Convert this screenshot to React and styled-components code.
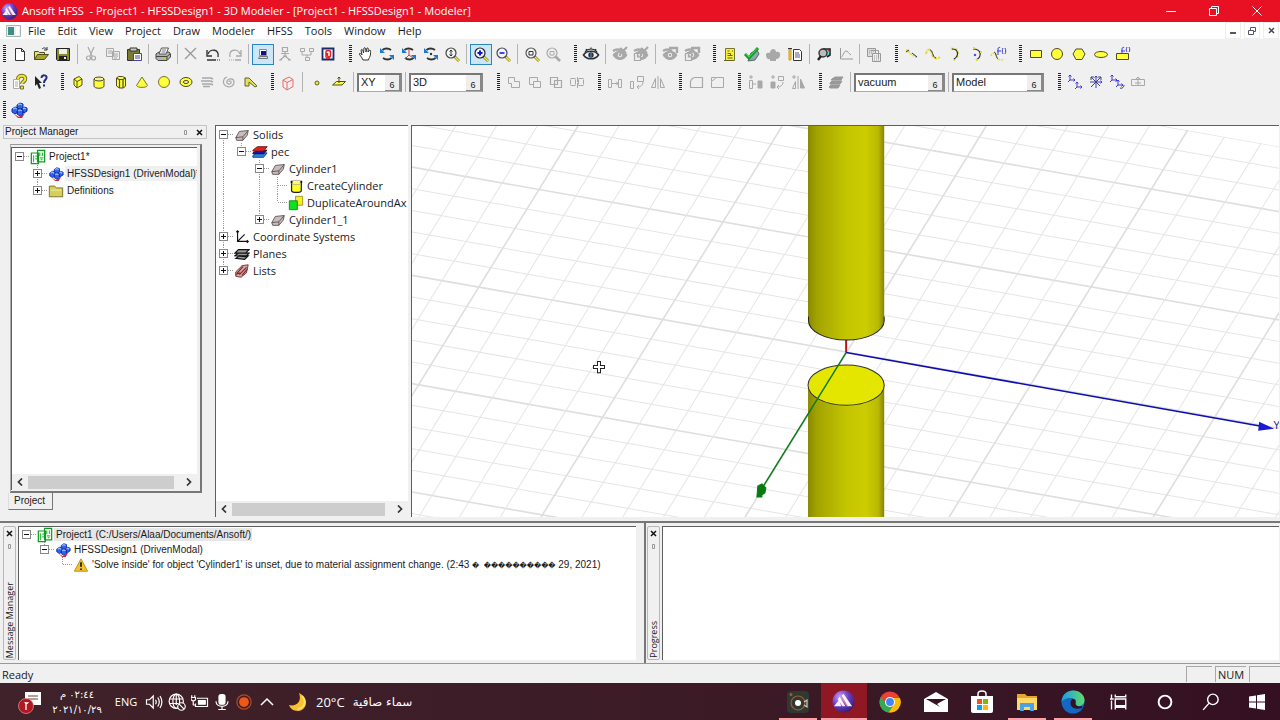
import React from 'react';
import styled, { createGlobalStyle, css } from 'styled-components';

const UI = '"Open Sans", "Noto Sans", sans-serif';
const CLASSIC = '"Liberation Sans", Arial, sans-serif';

const Global = createGlobalStyle`
  * { box-sizing: border-box; }
  body { margin: 0; background: #f0f0f0; color: #1a1a1a; font: 11px ${UI}; }
  button, select { font: inherit; color: inherit; }
  button { background: none; border: 0; padding: 0; margin: 0; }
  ul { list-style: none; margin: 0; padding: 0; }
  svg { display: block; }
`;

const App = styled.div`
  min-height: 100vh;
  display: flex;
  flex-direction: column;
`;

/* ---------- title and menu ---------- */
const TitleBar = styled.header`
  height: 22px;
  flex: none;
  display: flex;
  align-items: center;
  padding: 0 2px 0 1px;
  background: #e81123;
  color: #fff;
  h1 { flex: 1; margin: 0 0 0 4px; font: 11px/20px ${UI}; white-space: pre; }
`;
const WinButton = styled.button`
  width: 43px;
  height: 20px;
  display: flex;
  align-items: center;
  justify-content: center;
`;
const MenuBar = styled.nav`
  height: 17px;
  flex: none;
  display: flex;
  align-items: center;
  padding: 0 1px 0 6px;
  background: #fff;
`;
const MenuItem = styled.button`
  padding: 0 6px;
  font: 11px/17px ${UI};
  &:first-of-type { margin-left: 1px; }
`;
const ChildButton = styled.button`
  width: 16px;
  height: 17px;
  margin-left: 3px;
  display: grid;
  place-items: center;
  border: 1px solid #eee;
`;
const Spacer = styled.div`flex: 1;`;

/* ---------- toolbars ---------- */
const Toolbars = styled.div`
  flex: none;
  height: 86px;
  padding-top: 1px;
`;
const ToolRow = styled.div`
  display: flex;
  height: 28px;
  align-items: center;
`;
const Group = styled.div`
  width: ${p => p.$w}px;
  flex: none;
  height: 24px;
  display: flex;
  align-items: center;
  padding: 0 7px 0 3px;
`;
const Grip = styled.span`
  width: 3px;
  height: 18px;
  margin-right: 3px;
  background: repeating-linear-gradient(#222 0 1px, #f0f0f0 1px 2px);
`;
const ToolButton = styled.button`
  flex: 1 1 0;
  min-width: 0;
  max-width: 22px;
  height: 21px;
  display: flex;
  align-items: center;
  justify-content: center;
  ${p => p.$on && css`background: #cde6f7; border: 1px solid #2a86c0;`}
  svg { flex: none; }
`;
const Sep = styled.span`
  width: 1px;
  height: 20px;
  margin: 0 3px;
  background: #b4b4b4;
`;
const ComboBox = styled.span`
  width: ${p => p.$w}px;
  height: 19px;
  flex: none;
  display: flex;
  background: #fff;
  border: 2px solid #777;
  border-right-color: #888;
  border-bottom: 1px solid #aaa;
  select {
    flex: 1;
    min-width: 0;
    appearance: none;
    border: 0;
    padding: 0 0 0 2px;
    background: none;
    font: 11px/15px ${CLASSIC};
  }
  span {
    width: 15px;
    padding-top: 4px;
    background: #eee;
    border-right: 1px solid #888;
    border-bottom: 1px solid #888;
    font: 9px/12px ${CLASSIC};
    text-align: center;
  }
`;

/* ---------- work area ---------- */
const Work = styled.main`
  flex: 1;
  min-height: 391px;
  display: flex;
  gap: 3px;
`;
const ManagerPane = styled.section`
  width: 212px;
  flex: none;
  display: flex;
  flex-direction: column;
  padding: 0 5px 7px 3px;
`;
const Caption = styled.header`
  height: 14px;
  flex: none;
  display: flex;
  align-items: center;
  border: 1px solid #c4c4c4;
  h2 { flex: 1; margin: 0 0 0 1px; font: 10px/12px ${CLASSIC}; }
  button { width: 14px; display: grid; place-items: center; }
`;
const Frame = styled.div`
  flex: 1;
  margin: 5px 5px 0 7px;
  padding: 2px 3px 1px 0;
  display: flex;
  border-top: 1px solid #999;
  border-left: 1px solid #aaa;
  border-right: 2px solid #777;
  border-bottom: 2px solid #777;
`;
const Pane = styled.div`
  flex: 1;
  min-width: 0;
  display: flex;
  flex-direction: column;
  overflow: hidden;
  background: #fff;
  border-top: 1px solid #5e5e5e;
  border-left: 1px solid #5e5e5e;
`;
const ModelPane = styled.section`
  width: 193px;
  flex: none;
  display: flex;
`;
const ViewPane = styled.section`
  flex: 1;
  min-width: 0;
  margin-right: 1px;
  position: relative;
  background: #fff;
  border-top: 1px solid #5e5e5e;
  border-left: 1px solid #5e5e5e;
`;
const Scene = styled.svg`
  position: absolute;
  inset: 0;
  width: 100%;
  height: 100%;
`;
const Tab = styled.button`
  align-self: flex-start;
  height: 17px;
  margin-left: 5px;
  padding: 0 7px 0 5px;
  border: 1px solid #777;
  border-top: 0;
  border-left-color: #ddd;
  font: 10px/16px ${CLASSIC};
`;
const ScrollBar = styled.div`
  height: 16px;
  flex: none;
  display: flex;
  align-items: center;
  background: #f0f0f0;
  button { width: 16px; height: 16px; display: grid; place-items: center; }
`;
const Track = styled.span`
  flex: 1;
  height: 13px;
  margin-right: 4px;
`;
const Thumb = styled.span`
  display: block;
  width: 98%;
  height: 13px;
  background: #cdcdcd;
`;

/* ---------- trees ---------- */
const Tree = styled.ul`
  flex: 1;
  overflow: hidden;
  font: ${p => (p.$classic ? `10px ${CLASSIC}` : `11px ${UI}`)};
`;
const TreeRow = styled.li`
  height: ${p => p.$h}px;
  display: flex;
  align-items: center;
  white-space: pre;
  svg { flex: none; }
`;
const TreeLabel = styled.span`
  margin-left: 1px;
  padding: 0 1px 0 2px;
  line-height: ${p => p.$h - 2}px;
  background: ${p => p.$bg || 'none'};
`;
const Unreadable = styled.span`
  font: 7px "DejaVu Sans", sans-serif;
`;

/* ---------- bottom docks ---------- */
const Docks = styled.section`
  flex: none;
  height: 142px;
  display: flex;
  margin-top: 4px;
  border-top: 2px solid #777;
`;
const Dock = styled.div`
  flex: 1 1 0;
  display: flex;
  gap: 2px;
  min-width: 0;
  ${p => p.$first
    ? css`padding: 3px 8px 3px 3px;`
    : css`padding: 3px 1px 3px 1px; border-left: 2px solid #777;`}
`;
const SideCaption = styled.header`
  width: 13px;
  flex: none;
  display: flex;
  flex-direction: column;
  align-items: center;
  border: 1px solid #b8b8b8;
  border-radius: 2px;
  button { height: 13px; width: 11px; display: grid; place-items: center; }
  h2 {
    margin: auto 0 1px;
    writing-mode: vertical-rl;
    transform: rotate(180deg);
    font: 9px/11px ${UI};
  }
`;
const StatusBar = styled.footer`
  height: 20px;
  flex: none;
  display: flex;
  gap: 3px;
  padding: 2px 0 1px 2px;
  border-top: 1px solid #999;
  line-height: 17px;
`;
const StatusCell = styled.span`
  width: ${p => p.$w}px;
  padding-left: 2px;
  border-top: 1px solid #a8a8a8;
  border-left: 1px solid #a8a8a8;
  line-height: 15px;
`;

/* ---------- taskbar ---------- */
const TaskBar = styled.footer`
  height: 37px;
  flex: none;
  display: flex;
  align-items: stretch;
  background: linear-gradient(90deg, #40222a, #3b1a26 60%, #341022);
  color: #fff;
`;
const Tray = styled.div`
  display: flex;
  align-items: center;
  padding-left: 15px;
`;
const TrayButton = styled.button`
  width: ${p => p.$w || 23}px;
  height: 37px;
  display: flex;
  align-items: center;
  justify-content: center;
`;
const Clock = styled.time`
  width: 66px;
  text-align: center;
  font: 10px/15px "DejaVu Sans", sans-serif;
  span { display: block; }
`;
const Weather = styled.button`
  display: flex;
  align-items: center;
  gap: 8px;
  margin-left: 10px;
  font: 13px ${UI};
  bdi { font: 12px "DejaVu Sans", sans-serif; }
`;
const Apps = styled.div`
  width: 505px;
  margin-left: auto;
  display: flex;
`;
const AppButton = styled.button`
  flex: 1;
  display: flex;
  align-items: center;
  justify-content: center;
  background: ${p => (p.$active ? '#8f1824' : 'none')};
  ${p => p.$open && css`
    background-image: linear-gradient(#ffa0a8, #ffa0a8);
    background-size: ${p.$active ? '100%' : '38px'} 2px;
    background-position: bottom center;
    background-repeat: no-repeat;
  `}
`;

/* ---------- drawings ---------- */
const Y = '#ffff3c';
const K = '#4c4c1e';
const G = '#a8a8a8';
const B = '#3a3ad8';

const Svg = ({ s = 18, children, ...r }) => (
  <svg width={s} height={s} viewBox="0 0 18 18" fill="none" stroke="#333" strokeWidth="1" aria-hidden="true" {...r}>{children}</svg>
);

const lens = (c, inner, handle) => (
  <>
    <path d="M11.500 11.500 16 16" stroke={handle || '#77732a'} strokeWidth="2.600" />
    {!handle && <path d="M12 12 16 16" stroke="#f2e640" strokeWidth="1.600" />}
    <circle cx="8" cy="8" r="5" stroke={c} strokeWidth="1.200" fill={handle ? 'none' : '#f4f4f4'} />
    {inner}
  </>
);
const rotate = extra => (
  <>
    <path d="M4.500 5c2-2 6-2 8.500 0M13.500 13c-2 2-6 2-8.500 0" stroke="#333" strokeWidth="1.800" />
    <path d="M2 3v5h5zM16 15v-5h-5z" fill="#1678d8" stroke="none" />
    {extra}
  </>
);
const eye = (c, extra) => (
  <>
    <path d="M1.500 10c3-5 12-5 15 0-3 5-12 5-15 0z" stroke={c} strokeWidth="1.600" />
    <path d="M3 7c3-4 9-4 12 0M4 4l1 2M9 2.500v2M14 4l-1 2" stroke={c} strokeWidth="1.200" />
    <circle cx="9" cy="10" r="2.700" fill={c} stroke="none" />
    {extra}
  </>
);
const eyeOff = extra => (
  <>
    <path d="M2 10c3-5 11-5 14 0-3 6-11 6-14 0z" fill={G} stroke={G} />
    <path d="M2 6c3-2 6-2 9 0" stroke={G} strokeWidth="2.400" />
    <circle cx="9" cy="10" r="2.200" fill="#eee" stroke="none" />
    <circle cx="9" cy="10" r="1.200" fill={G} stroke="none" />
    {extra}
  </>
);
const crossMark = <path d="m9 3 6 5M16 2 9 9" stroke={G} strokeWidth="2.200" />;
const barMark = <path d="M8 3h8v5" stroke={G} strokeWidth="2.400" />;
const boxMark = <path d="M2.500 8.500h6v7h-6zM5.500 9v3h3" fill="#eee" stroke={G} strokeWidth="1.200" />;
const axes = (x, y, c = B) => (
  <path key={x + '-' + y} d={`M${x} ${y}v-5m-1.500 1.500 1.500-1.500 1.500 1.500M${x} ${y}h5m-1.500-1.500 1.500 1.500-1.500 1.500M${x} ${y}l-2 2`} stroke={c} />
);

const ICONS = {
  new: <path d="M4.500 3.500h6l3 3v9h-9zM10.500 3.500v3h3" fill="#fff" />,
  open: <><path d="M2.500 14.500v-8h4l1 1h5v2" fill="#e8e27a" stroke={K} /><path d="m2.500 14.500 3-5h11l-4 5z" fill="#a8a32a" stroke={K} /><path d="M10 4c2-2 4-1 5 1m0-3v3h-3" /></>,
  save: <><path d="M2.500 3.500h13v12h-12l-1-1z" fill="#8a8a2a" stroke="#222" /><path d="M5 4h8v5H5z" fill="#eee" stroke="none" /><path d="M5 11h8v4H5z" fill="#222" stroke="none" /><path d="M10 12h2v2h-2z" fill="#eee" stroke="none" /></>,
  cut: <g stroke={G} strokeWidth="1.200"><path d="m6 2 4 9M12 2 8 11" /><circle cx="6.500" cy="13" r="2" /><circle cx="11.500" cy="13" r="2" /></g>,
  copy: <g stroke={G}><path d="M2.500 3.500h7v8h-7zM8.500 6.500h7v8h-7z" fill="#eee" /><path d="M4 6h4M4 8h4M10 9h4M10 11h4M10 13h3" /></g>,
  paste: <><path d="M2.500 4.500h12v11h-12z" fill="#7a7a30" stroke="#333" /><path d="M5 3h7v3H5z" fill="#ccc" stroke="#333" /><path d="M8.500 8.500h8v7h-8z" fill="#fff" stroke="#449" /><path d="M10 11h5M10 13h5" stroke="#449" /></>,
  print: <><path d="m2 9 3-2h10l1.500 2v3L13 15.500H4L2 13.500z" fill="#b4b4b4" stroke="#444" /><path d="m5 9 2.500-6h7L12 9z" fill="#fff" stroke="#555" /><path d="M8 5h4M7.500 7h4" stroke="#777" /><path d="M2 11.500h11l3-2.500M13 12v3" stroke="#444" /><path d="M9 13.500h3" stroke="#cccc20" /></>,
  del: <path d="m3 3 11 11M14 3 3 14" stroke="#999" strokeWidth="1.400" />,
  undo: <><path d="M4 9c2-6 12-5 10 3" strokeWidth="1.400" /><path d="M3 5v6h5" strokeWidth="1.400" /><path d="M3 15h9" strokeWidth="1.500" /><path d="M13 15h3" strokeDasharray="1 1" /></>,
  redo: <g stroke={G}><path d="M14 9C12 3 2 4 4 12M15 5v6h-5" strokeWidth="1.300" /><path d="M3 15h5" strokeDasharray="1 1" /><path d="M9 15h6" strokeWidth="1.500" /></g>,
  monitor: <><path d="M5.500 4.500h7v6h-7z" fill="#fff" stroke="#8a8a9a" /><path d="M7 6h5v4H7z" fill="#11118f" stroke="none" /><path d="m4.500 13.500 1-2h8v2z" fill="#ddd" stroke="#777" /></>,
  local: <g stroke={G}><path d="M6.500 2.500h5v4h-5zM5 8.500h8M9 7v4M4 15l5-4 5 4M7 11h4M3 15h3M12 15h3" strokeWidth="1.200" /></g>,
  network: <g stroke={G}><path d="M2.500 3.500h4v3h-4zM11.500 3.500h4v3h-4zM4 7v3h9V7M9 10v2M7.500 12.500h4v3h-4z" /></g>,
  queue: <><path d="M3.500 3.500h11v11h-11z" fill="#fff" stroke="#1b2a70" strokeWidth="1.800" /><path d="M7 12.500V7c0-2 4.500-2 4.500 0v3.500c0 2-3 2-3 0V8M7 13h4" stroke="#d22" strokeWidth="1.500" /></>,
  hand: <path d="M6 15c-1-3-4-5-3.500-6.500C4 8 5 10 5 10L4 5c1-1.500 2 0 2.500 3L7 3c1-1 2 0 2 4l1-4c1.500-.5 1.500 1 1 4l1.500-2c1.500 0 1 2 1 4 0 3-2 4-2 6z" fill="#fff" />,
  rot1: rotate(),
  rot2: rotate(<path d="M9 5v5l-4 4M9 10l4 3" stroke="#d33" />),
  rot3: rotate(<circle cx="9" cy="9" r="1.200" fill="#333" stroke="none" />),
  zoomDyn: lens('#444', <path d="M8 5v6M6.500 6.500 8 5l1.500 1.500M6.500 9.500 8 11l1.500-1.500" />),
  zoomIn: lens('#223', <path d="M8 5.500v5M5.500 8h5" stroke="#1111d0" strokeWidth="2" />),
  zoomOut: lens('#446', <path d="M5.500 8h5" stroke="#1111d0" strokeWidth="1.500" />),
  fit: lens('#555', <path d="M6 6.500h4v3.500H6z" />),
  fitSel: lens(G, <path d="M6 6.500h4v3.500H6z" stroke={G} />, G),
  eye: eye('#2c3038', <path d="M9 8v4" stroke="#49e" />),
  hide1: eyeOff(crossMark),
  hide2: eyeOff(<>{crossMark}{boxMark}</>),
  hide3: eyeOff(barMark),
  hide4: eyeOff(<>{barMark}{boxMark}</>),
  list: <><path d="M4.500 3.500h9v12h-9z" fill="#f5f03a" stroke="#77752a" /><path d="M3 15.500h9M6.500 6h2M11 6h1M6.500 8.500h3v2M6.500 10.500h5M6.500 13h5" stroke="#66632a" /></>,
  check: <><path d="m8 8 6-3 2 4-4 6-7 1z" fill="#8aa" stroke="#566" /><path d="m2 9 4 4L15 3" stroke="#1b9a2e" strokeWidth="3" /><path d="m3 9 3 3L14 3.500" stroke="#3fe052" strokeWidth="1" /></>,
  analyze: <path d="M2 10c0-3 4-2 4-2 0-5 6-5 6-1 3-1 5 1 4 4-1 3-3 3-4 3v2H6v-2c-2 1-4-1-4-4z" fill={G} stroke="none" />,
  notes: <><path d="M3 4h2v11H3z" fill="#ec4" stroke="#cc9a22" /><path d="M2 3.500h4" /><path d="M7.500 4.500h6l2 2v9h-8z" fill="#fff" /><path d="M9 8h4M9 10h5M9 12h5" stroke="#558" /></>,
  field: <><path d="M8 4h7v6l-3 2" fill="#5dd" stroke="#222" strokeWidth="1.600" /><circle cx="8" cy="8" r="4" fill="#bbb" stroke="#333" strokeWidth="1.400" /><path d="m6 11-3 4" stroke="#222" strokeWidth="2.400" /><path d="m13 5 2 3" stroke="#d33" /></>,
  graph: <path d="M4.500 3v11H17M4 13c3-1 4-7 6-7s2 2 5 4" stroke="#999" />,
  report: <g stroke="#999"><path d="M2.500 3.500h8v8h-8z" fill="#ddd" /><path d="M7.500 8.500h8v8h-8z" fill="#eee" /><path d="M4 6h5M4 8h3M9 11h5M9 13h5M9 15h5" strokeDasharray="1 1" /><path d="M5.500 5.500h8v8" /></g>,
  line: <><path d="M3 6c3-3 3 3 5 3s4 5 7 2" stroke="#e4da3a" strokeWidth="2" strokeDasharray="2 1" /><path d="m3 7 3-2M9 8l5 4" /></>,
  spline: <><path d="M2 9c1-6 5-6 6 0s6 5 8 3" stroke="#e4da3a" strokeWidth="2" strokeDasharray="3 1" /><path d="M6 5c3 0 2 7 6 8" /></>,
  arc3: <><path d="M5 4c9-2 9 9 2 11" stroke="#e4da3a" strokeWidth="2.400" strokeDasharray="2 2" /><path d="M6 4c7 0 7 7 2 10" strokeWidth="1.200" /></>,
  arcC: <><path d="M5 4c9 0 9 8 3 11" strokeWidth="1.200" /><path d="M5 3h2M12 7h2M8 15h2" stroke="#e4da3a" strokeWidth="2" /><circle cx="7" cy="10" r=".8" fill={B} stroke={B} /></>,
  eqCurve: <><path d="M2 11c3-6 5-2 6 1s4 4 7 2" stroke="#e4da3a" strokeWidth="1.500" strokeDasharray="2 1" /><path d="M5 7c2 0 2 6 4 7" /><path d="M9 10V4c0-2 2-2 2-1M8 6h4M14 3c-1 2-1 4 0 6M16 3c1 2 1 4 0 6" stroke={B} /></>,
  rect: <path d="M3.500 5.500h11v7h-11z" fill={Y} stroke={K} />,
  circle: <circle cx="9" cy="9" r="5.500" fill={Y} stroke={K} />,
  poly: <path d="m6 4-3 5 3 5.500h6L15 9l-3-5z" fill={Y} stroke={K} />,
  ellipse: <ellipse cx="9" cy="9.500" rx="6.500" ry="3" fill={Y} stroke={K} />,
  eqSurf: <><path d="M3.500 8.500h12v6h-12z" fill={Y} stroke={K} /><path d="M9 9V4c0-2 2-2 2-1M8 6h4M14 2c-1 2-1 4 0 5M16 2c1 2 1 4 0 5" stroke={B} /></>,
  help: <><path d="M2.500 6.500h6v9h-6z" fill="#fff" stroke="#aaa" /><path d="M4 9h3M4 11h3M4 13h3" stroke="#aaa" /><path d="M7 6c0-5 9-4 7 1-1 2-3 2-3 4" stroke="#77712a" strokeWidth="4" /><path d="M7 6c0-5 9-4 7 1-1 2-3 2-3 4" stroke="#f0e62a" strokeWidth="2" /><path d="M9.500 13h3v3h-3z" fill="#f0e62a" stroke="#77712a" /></>,
  what: <><path d="m3 3 7 7H7l2 5-2 1-2-5-2 2z" fill="#222" stroke="none" /><path d="M9.500 5c0-4 6-3 5 0-.5 2-2.500 2-2.500 5M11 12.500h2" stroke="#262a80" strokeWidth="2" /></>,
  box: <><path d="m5 6 5-2.500 3 2.500v6l-5 3-3-3z" fill={Y} stroke={K} /><path d="m5 6 3 2.500v6M8 8.500 13 6" stroke={K} /></>,
  cyl: <><path d="M4 6v7c0 3 10 3 10 0V6" fill={Y} stroke={K} /><ellipse cx="9" cy="6" rx="5" ry="2" fill="#f3ef9a" stroke={K} /></>,
  prism: <><path d="M4.500 5v8l3 2h4l2-2V5l-3-1.500h-4z" fill={Y} stroke={K} /><path d="M4.500 5 7 6.500h4L13.500 5M7.500 7v8M11 7v8" stroke={K} strokeWidth="1.200" /></>,
  cone: <path d="M9 4 3.500 12.500c1 2.500 10 2.500 11 0z" fill={Y} stroke="#77752a" />,
  sphere: <circle cx="9" cy="9" r="5.500" fill={Y} stroke="#77752a" />,
  torus: <><ellipse cx="9" cy="9" rx="6" ry="4.500" fill={Y} stroke={K} /><ellipse cx="9" cy="9" rx="2.600" ry="1.500" fill="#eee" stroke={K} /></>,
  helix: <path d="M4 5h9l2 1M3 8h10l2 1M4 11h9l2 1M5 13.500h7" stroke={G} strokeWidth="1.500" />,
  spiral: <path d="M9 9c0-2 3-1 2 1s-5 1-4-2 7-3 7 1-4 6-8 4-3-8 1-9" stroke="#aaa" strokeWidth="1.200" />,
  bond: <path d="M4 13V5h4l8 8-2 1-6-5v4z" fill="#e4e05a" stroke="#66632a" />,
  redBox: <path d="m4 7 6-3 4 2.500v7L8 17l-4-3zM4 7l4 2.500V17M8 9.500l6-3" stroke="#e66" />,
  point: <circle cx="9" cy="10" r="2" fill="#e8e840" stroke="#66632a" />,
  plane: <><path d="m2.500 12 4-3.500h9L12 12z" fill={Y} stroke={K} /><path d="M9 10V4M7.500 5.500 9 4l1.500 1.500" stroke={K} /></>,
  unite: <path d="M3.500 4.500h6v4h5v6h-8v-4h-3z" stroke={G} />,
  subtract: <path d="M3.500 4.500h8v4M3.500 4.500v7h4M7.500 8.500h7v6h-7z" stroke={G} />,
  intersect: <path d="M3.500 4.500h7v7h-7zM7.500 7.500h7v7h-7z" stroke={G} strokeWidth="1.200" />,
  split: <path d="M2.500 5.500h5v7h-5zM10.500 5.500h5v7h-5zM9.500 4v11" stroke={G} strokeDasharray="5 1" />,
  move: <g stroke={G}><path d="M2.500 6.500h3v8h-3zM12.500 6.500h3v8h-3zM6 10.500h6M10 8.500l2 2-2 2" /></g>,
  rotateObj: <g stroke={G}><path d="M2.500 8.500h3v7h-3zM9.500 3.500h6v5h-6zM15 9c0 3-2 5-6 5m2-2-2 2 2 2" /></g>,
  mirror: <g stroke={G}><path d="m2.500 14.500 4-9v9zM9 3v13M11.500 5.500v9h4z" /></g>,
  fillet: <path d="M3.500 14.500v-6c1-3 3-4 5-4h7v10z" stroke={G} strokeWidth="1.200" />,
  chamfer: <path d="M3.500 14.500v-6l5-4h7v10zM3.500 8V4.500H8" stroke={G} />,
  dupLine: <g stroke={G}><path d="M3 4h4M5 2v4M3.500 7.500h3v8h-3zM7 11h3" /><path d="M12 8h4v7h-4z" fill={G} /></g>,
  dupAxis: <g stroke={G}><path d="M3 4h4M5 2v4M10.500 3.500h5v4h-5zM15 9c0 3-2 5-6 5m2-2-2 2 2 2" /><path d="M3 9h4v6H3z" fill={G} /></g>,
  dupMirror: <g stroke={G}><path d="M3 4h4M5 2v4M3.500 15.500l3-7v7zM9 3v13" /><path d="M11.500 6v9h4z" fill={G} /></g>,
  layers: <path d="m5 6 3-2h8l-2 3H4zM3 10l2-2h10l-2 3H3zM2 14l2-2h9l-2 3H3z" fill="#999" stroke="#999" />,
  cs1: <>{axes(4, 7)}{axes(11, 14)}</>,
  cs2: <><path d="M9 15V3M7.500 4.500 9 3l1.500 1.500M3 9h12M13.500 7.500 15 9l-1.500 1.500M6 12l-2 2" stroke={B} /><path d="m4 4 9 9M14 4l-8 8M4 7V4h3M14 7V4h-3" stroke="#446" /></>,
  cs3: <>{axes(4, 7)}{axes(10, 12)}<path d="M12 15c2 1 4-1 4-3" stroke="#334" /></>,
  csNone: <path d="M2.500 6.500h13v6h-13zM9 4v8M7 6l2-2 2 2M6 10h6" stroke={G} />,
};
const Blocks = () => (
  <>
    <path d="m4 13 5 3 6-4-3 5H8z" fill="#d8232f" stroke="none" />
    <path d="m2 8 3-2 3 1v4l-3 2-3-2zM7 10l3-2 3 1v4l-3 2-3-2zM7 4l3-2 3 1v4l-3 1-3-1zM12 8l2-2 3 1v3l-3 2-2-1z" fill="#2f62ee" stroke="#1128a8" />
    <path d="m3 8 2-1 2 1M8 4l2-1 2 1M8 10l2-1 2 1M13 8l1-1 2 1" stroke="#8cc0ff" strokeWidth="1.300" />
  </>
);
ICONS.blocks = <Blocks />;

const TREE_ICONS = {
  project: <><path d="M1.500 4.500h8v12h-8zM8.500 1.500h8v13h-8z" fill="#fff" stroke="#119a22" strokeWidth="1.400" /><path d="M4 7v8M6 8h2M6 11h2M11 4v4M14 4v4M11 10h4M12 12h2" stroke="#31c441" strokeWidth="1.400" /></>,
  blocks: <Blocks />,
  folder: <><path d="M1.500 15.500v-12h6l2 2h7v10z" fill="#d6cf5c" stroke="#6d6927" /><path d="M3 8h12" stroke="#f4f0a0" /></>,
  solid: <><path d="m2 12 4-7 10-1-1 5-5 6H3z" fill="#c9bcbc" stroke="#5c5050" /><path d="m2 12 8-1 6-7M10 11v4" stroke="#5c5050" /></>,
  pec: <><path d="m1 13 5-3h11l-4 5H1z" fill="#2b80e8" stroke="#123a90" /><path d="m1 10 5-3h11l-4 4H1z" fill="#1515a8" stroke="#111" /><path d="m1 7 5-4h11l-4 5H1z" fill="#e02020" stroke="#701010" /></>,
  cyl: <><path d="M4 5v9c0 3 11 3 11 0V5" fill="#ffff20" stroke="#222" strokeWidth="1.400" /><ellipse cx="9.500" cy="5" rx="5.500" ry="2.500" fill="#fff97a" stroke="#aa9" /><path d="M4 3v3M15 3v3" stroke="#111" strokeWidth="2" /></>,
  dup: <><path d="M8.500 1.500h8v10h-8z" fill="#f8ee20" stroke="#998f20" /><path d="M1.500 6.500h9v10h-9z" fill="#10e020" stroke="#0a8a14" /></>,
  coord: <path d="M4 2v12h12M4 14l8-8M2.500 3.500 4 2l1.500 1.500M14.500 12.500 16 14l-1.500 1.500" stroke="#111" strokeWidth="1.300" />,
  planes: <><path d="m1 8 4-4h12l-4 4zM1 11l4-3h12l-4 4zM2 14l4-3h10l-4 4z" fill="#999" stroke="#111" strokeWidth="1.300" /></>,
  lists: <><path d="m2 10 7-7 7-1-2 9-6 5-6-1z" fill="#cfa9a9" stroke="#6b2b2b" /><path d="m3 12 7-8M6 13l8-8M9 14l6-7M2 13l5-2" stroke="#8b2222" strokeWidth="1.300" /></>,
  warn: <><path d="m9 2 7.500 14h-15z" fill="#f3c22b" stroke="#b98a14" /><path d="M9 6v5M9 13v1.500" stroke="#222" strokeWidth="2" /></>,
};

const CloseX = ({ c = '#111' }) => <svg width="7" height="7" viewBox="0 0 7 7" aria-hidden="true"><path d="m1 1 5 5M6 1 1 6" stroke={c} strokeWidth="1.500" /></svg>;
const Pin = () => <svg width="3" height="5" fill="none" stroke="#999" aria-hidden="true"><path d="M.5.5h2v4h-2z" /></svg>;

const Logo = ({ s = 16 }) => (
  <svg width={s} height={s} viewBox="0 0 24 24" aria-hidden="true">
    <defs><radialGradient id="orb" cx=".35" cy=".3" r=".8"><stop offset="0" stopColor="#c8a8ff" /><stop offset=".5" stopColor="#6a3bbd" /><stop offset="1" stopColor="#2b1b6d" /></radialGradient></defs>
    <circle cx="12" cy="12" r="11.500" fill="url(#orb)" />
    <path d="m2 17 5-6 3 6zM6 10l2-3 6 10h-3zM10 6l2-2 9 13h-5z" fill="#fff" opacity=".92" />
    <path d="m10 6 7 11h-2L9 7z" fill="#e88" opacity=".7" />
  </svg>
);

const Tool = ({ n, on }) => (
  <ToolButton $on={on} aria-label={n}><Svg>{ICONS[n]}</Svg></ToolButton>
);
const Combo = ({ w, value, label }) => (
  <ComboBox $w={w}>
    <select aria-label={label} defaultValue={value}><option>{value}</option></select>
    <span aria-hidden="true">6</span>
  </ComboBox>
);

const ROW1 = [
  [346, 'new open save | cut copy paste | print | del undo redo | *monitor local network queue'],
  [225, 'hand rot1 rot2 rot3 zoomDyn | *zoomIn zoomOut | fit fitSel'],
  [139, 'eye | hide1 hide2 | hide3 hide4'],
  [182, 'list check analyze notes | field graph | report'],
  [124, 'line spline arc3 arcC eqCurve'],
  [124, 'rect circle poly ellipse eqSurf'],
];
const ROW2 = [
  [58, 'help what'],
  [210, 'box cyl prism cone sphere torus helix spiral bond'],
  [226, 'redBox | point plane | =XY | =3D'],
  [101, 'unite subtract intersect split'],
  [81, 'move rotateObj mirror'],
  [59, 'fillet chamfer'],
  [81, 'dupLine dupAxis dupMirror'],
  [239, 'layers | =vacuum | =Model'],
  [101, 'cs1 cs2 cs3 csNone'],
];
const COMBOS = {
  '=XY': [45, 'XY', 'Drawing plane'],
  '=3D': [74, '3D', 'Movement mode'],
  '=vacuum': [91, 'vacuum', 'Material'],
  '=Model': [92, 'Model', 'Object kind'],
};
const ToolGroups = ({ groups }) => groups.map(([w, items]) => (
  <Group key={items} $w={w} role="group">
    <Grip />
    {items.split(' ').map((n, i) => {
      if (n === '|') return <Sep key={i} />;
      if (COMBOS[n]) return <Combo key={i} w={COMBOS[n][0]} value={COMBOS[n][1]} label={COMBOS[n][2]} />;
      return n[0] === '*' ? <Tool key={i} n={n.slice(1)} on /> : <Tool key={i} n={n} />;
    })}
  </Group>
));

/* One guide column of a tree row: u/d/r are the line's arms, + and - the toggle. */
const Guide = ({ k, h }) => {
  const m = Math.floor(h / 2);
  const has = c => k.includes(c);
  const box = has('+') || has('-');
  return (
    <svg width="18" height={h} viewBox={`0 0 18 ${h}`} shapeRendering="crispEdges" aria-hidden="true">
      <g stroke="#999" strokeDasharray="1 1">
        {has('u') && <path d={`M7.500 0V${m}`} />}
        {has('d') && <path d={`M7.500 ${m}V${h}`} />}
        {has('r') && <path d={`M8 ${m + 0.5}H18`} />}
      </g>
      {box && <path d={`M3.500 ${m - 3.5}h8v8h-8z`} fill="#fff" stroke="#888" />}
      {box && <path d={`M5 ${m + 0.5}h5`} stroke="#111" />}
      {has('+') && <path d={`M7.500 ${m - 2}v5`} stroke="#111" />}
    </svg>
  );
};
const TreeView = ({ rows, h, ...rest }) => (
  <Tree {...rest}>
    {rows.map(([guides, icon, text, bg]) => (
      <TreeRow key={icon + guides.length + text} $h={h}>
        {guides.map((k, i) => <Guide key={i} k={k} h={h} />)}
        <Svg s={16}>{TREE_ICONS[icon]}</Svg>
        <TreeLabel $h={h} $bg={bg}>{text}</TreeLabel>
      </TreeRow>
    ))}
  </Tree>
);
const PROJECT = [
  [['r-'], 'project', 'Project1*'],
  [['', 'udr+'], 'blocks', 'HFSSDesign1 (DrivenModal)*', '#f0f0f0'],
  [['', 'ur+'], 'folder', 'Definitions'],
];
const MODEL = [
  [['dr-'], 'solid', 'Solids'],
  [['ud', 'ur-'], 'pec', 'pec'],
  [['ud', '', 'udr-'], 'solid', 'Cylinder1'],
  [['ud', '', 'ud', 'udr'], 'cyl', 'CreateCylinder'],
  [['ud', '', 'ud', 'ur'], 'dup', 'DuplicateAroundAx'],
  [['ud', '', 'ur+'], 'solid', 'Cylinder1_1'],
  [['udr+'], 'coord', 'Coordinate Systems'],
  [['udr+'], 'planes', 'Planes'],
  [['ur+'], 'lists', 'Lists'],
];
const MESSAGES = [
  [['r-'], 'project', 'Project1 (C:/Users/Alaa/Documents/Ansoft/)', '#e6e6e6'],
  [['', 'ur-'], 'blocks', 'HFSSDesign1 (DrivenModal)'],
  [['', '', 'ur'], 'warn', (
    <>
      {"'Solve inside' for object 'Cylinder1' is unset, due to material assignment change. (2:43 "}
      <Unreadable>{'\uFFFD  '}{'\uFFFD'.repeat(10)}</Unreadable>
      {' 29, 2021)'}
    </>
  )],
];

const HScroll = () => (
  <ScrollBar>
    <button aria-label="Scroll left"><svg width="6" height="8" viewBox="0 0 6 8" fill="none"><path d="M5 0.500 1.500 4 5 7.500" stroke="#333" strokeWidth="1.700" /></svg></button>
    <Track><Thumb /></Track>
    <button aria-label="Scroll right"><svg width="6" height="8" viewBox="0 0 6 8" fill="none"><path d="M1 0.500 4.500 4 1 7.500" stroke="#333" strokeWidth="1.700" /></svg></button>
  </ScrollBar>
);

const alongY = Array.from({ length: 30 }, (_, i) => i - 8).map(i => {
  const y = 167 + i * 21.6;
  return { major: i % 5 === 0, d: `M412 ${y}L1280 ${y + 153}` };
});
const alongX = Array.from({ length: 31 }, (_, i) => i - 13).map(i => {
  const x = 845 + i * 40.7;
  return { major: i % 5 === 0, d: `M${x + 139.7} 126L${x - 100.7} 516` };
});

const ModelScene = () => (
  <Scene viewBox="412 126 867 390" preserveAspectRatio="xMinYMin slice" role="img" aria-label="3D model view">
    <defs>
      <linearGradient id="side">
        <stop offset="0" stopColor="#8a8a00" /><stop offset=".12" stopColor="#a3a300" /><stop offset=".5" stopColor="#c3c500" />
        <stop offset=".75" stopColor="#cccd00" /><stop offset=".92" stopColor="#b9ba00" /><stop offset="1" stopColor="#858500" />
      </linearGradient>
      <clipPath id="extent"><path d="M412 126h750l118 21v369H412z" /></clipPath>
    </defs>
    <g clipPath="url(#extent)" fill="none">
      {alongY.concat(alongX).map(l => (
        <path key={l.d} d={l.d} stroke={l.major ? '#dedede' : '#e5e5e5'} strokeWidth={l.major ? 1.6 : 1} />
      ))}
    </g>
    <path d="M845 338v14" stroke="#c01818" strokeWidth="2" />
    <path d="M807 120v200a38 19.500 0 0 0 76 0V120z" fill="url(#side)" />
    <path d="M807.500 316v4a37.750 19.500 0 0 0 75.500 0v-4" fill="none" stroke="#222" />
    <path d="M807 384v140h76V384z" fill="url(#side)" />
    <ellipse cx="845" cy="384.500" rx="38" ry="20" fill="#e4e600" stroke="#333" />
    <path d="M845 352 1262 426" stroke="#0c0cb0" strokeWidth="1.600" />
    <path d="m1272 428-15-7-1 9z" fill="#1a1ad0" />
    <text x="1271" y="428" fontFamily="Liberation Sans" fontSize="10" fill="#1a1a90">Y</text>
    <path d="m845 352-83 134" stroke="#0c7a18" strokeWidth="1.500" />
    <path d="m757 485 4-2 4 4-1 5-3 2v2h-2v-2h-1v2h-2z" fill="#077a12" stroke="#077a12" />
    <path d="M597 361h3v4h4v3h-4v4h-3v-4h-4v-3h4z" fill="#fff" stroke="#222" />
  </Scene>
);

const TI = ({ s = 18, children, ...r }) => <svg width={s} height={s} viewBox="0 0 24 24" fill="none" stroke="#fff" strokeWidth="1.600" aria-hidden="true" {...r}>{children}</svg>;

const APPS = [
  ['Recorder', { open: true }, <TI s={24}><rect x="1" y="1" width="22" height="22" rx="4" fill="#2f3833" stroke="none" /><circle cx="12" cy="13" r="7" stroke="#a35a2a" strokeWidth="1.200" /><circle cx="12" cy="13" r="3" fill="#fff" stroke="none" /><circle cx="5" cy="4.500" r="1.500" fill="#a35a2a" stroke="none" /><path d="m18 12 3-2v7l-3-2" stroke="#ccc" strokeWidth="1.200" /></TI>],
  ['HFSS', { open: true, active: true }, <Logo s={23} />],
  ['Chrome', {}, <svg width="22" height="22" viewBox="0 0 24 24" aria-hidden="true"><circle cx="12" cy="12" r="11.500" fill="#ea4335" /><path d="M2 6.500a11.500 11.500 0 0 0 8.500 17l5-8.500-3-1H8z" fill="#34a853" /><path d="M10.500 23.400A11.500 11.500 0 0 0 22.800 7.500H13l3.500 7z" fill="#fbbc05" /><circle cx="12" cy="12" r="5.500" fill="#fff" /><circle cx="12" cy="12" r="4.300" fill="#4285f4" /></svg>],
  ['Mail', {}, <svg width="24" height="20" viewBox="0 0 24 20" aria-hidden="true"><path d="M0 7 12 0l12 7v13H0z" fill="#fff" /><path d="m2 7 20 0-9 5 3 3z" fill="#35131f" /></svg>],
  ['Store', {}, <svg width="24" height="24" viewBox="0 0 24 24" aria-hidden="true"><path d="M8 7V4c0-4 8-4 8 0v3" fill="none" stroke="#fff" strokeWidth="1.500" /><path d="M1 6h22v15q0 2-2 2H3q-2 0-2-2z" fill="#fff" /><path d="M7 9h5v5H7z" fill="#f25022" /><path d="M13 9h5v5h-5z" fill="#7fba00" /><path d="M7 15h5v5H7z" fill="#00a4ef" /><path d="M13 15h5v5h-5z" fill="#ffb900" /></svg>],
  ['Explorer', { open: true }, <svg width="22" height="20" viewBox="0 0 22 20" aria-hidden="true"><path d="M1 2h8l2 2h10v14H1z" fill="#e8a72c" /><path d="M1 6h20v12H1z" fill="#ffd866" /><path d="M4 19v-8h14v8h-4v-4H8v4z" fill="#4aa3df" /></svg>],
  ['Edge', { open: true }, <svg width="24" height="24" viewBox="0 0 24 24" aria-hidden="true"><defs><linearGradient id="edgeTop" x1="0" x2="1"><stop offset="0" stopColor="#1c9de0" /><stop offset="1" stopColor="#5fdc6a" /></linearGradient></defs><circle cx="12" cy="12" r="11.500" fill="#1368c4" /><path d="M.5 12C1 4 7 .5 12 .5c7 0 11.500 5 11.500 9.500 0 4-3 6-6 6-3 0-4-1-3-3 1-3-2-5-5-5-4 0-8 2-9 4z" fill="url(#edgeTop)" /><path d="M9.500 13c0 4 4 7 11 5l1-.5-1-1.500c-3 1-6 0-6-3 1-3-1-4-2-4-2 0-3 2-3 4z" fill="#341022" /></svg>],
  ['Task view', {}, <TI s={18} strokeWidth="1.800"><path d="M2 2v5M2 10v12M0 8h5M7 2v3h14V2M7 8h14v9H7zM7 22v-3h14v3" /></TI>],
  ['Cortana', {}, <TI s={18} strokeWidth="2.600"><circle cx="12" cy="12" r="8.500" /></TI>],
  ['Search', {}, <TI s={18} strokeWidth="1.900"><circle cx="14.500" cy="8.500" r="7" /><path d="m9.500 13.500-8 9" /></TI>],
  ['Start', {}, <svg width="16" height="16" viewBox="0 0 16 16" aria-hidden="true"><path d="m0 2.500 7-1v6H0zM8 1.300 16 0v7.500H8zM0 8.500h7v6l-7-1zM8 8.500h8V16l-8-1.300z" fill="#fff" /></svg>],
];

export default function HfssWindow() {
  return (
    <App>
      <Global />
      <TitleBar>
        <Logo s={17} />
        <h1>{'Ansoft HFSS  - Project1 - HFSSDesign1 - 3D Modeler - [Project1 - HFSSDesign1 - Modeler]'}</h1>
        <WinButton aria-label="Minimize"><svg width="10" height="10"><path d="M0 5.500h10" stroke="#fff" /></svg></WinButton>
        <WinButton aria-label="Restore"><svg width="10" height="10" fill="none" stroke="#fff"><path d="M.5 2.500h7v7h-7zM2.500 2V.5h7v7H8" /></svg></WinButton>
        <WinButton aria-label="Close"><svg width="10" height="10" stroke="#fff"><path d="m.5.5 9 9M9.500.5l-9 9" /></svg></WinButton>
      </TitleBar>
      <MenuBar>
        <svg width="15" height="12" viewBox="0 0 15 12" aria-hidden="true"><path d="M.5.5h14v11H.5z" fill="#e8f0f2" stroke="#a9b6b9" /><path d="M2 2h6v8H2z" fill="#3f8f84" /><path d="M10 2h3v8h-3z" fill="#fff" /></svg>
        {['File', 'Edit', 'View', 'Project', 'Draw', 'Modeler', 'HFSS', 'Tools', 'Window', 'Help'].map(m => <MenuItem key={m}>{m}</MenuItem>)}
        <Spacer />
        <ChildButton aria-label="Minimize document"><svg width="6" height="7"><path d="M0 6h6" stroke="#556" strokeWidth="2" /></svg></ChildButton>
        <ChildButton aria-label="Restore document"><svg width="8" height="8" fill="none" stroke="#556"><path d="M.5 3.500h5v4h-5zM2.500 3V.5h5v4H6" /></svg></ChildButton>
        <ChildButton aria-label="Close document"><CloseX c="#445" /></ChildButton>
      </MenuBar>
      <Toolbars>
        <ToolRow><ToolGroups groups={ROW1} /></ToolRow>
        <ToolRow><ToolGroups groups={ROW2} /></ToolRow>
        <ToolRow><ToolGroups groups={[[35, 'blocks']]} /></ToolRow>
      </Toolbars>
      <Work>
        <ManagerPane>
          <Caption>
            <h2>Project Manager</h2>
            <button aria-label="Auto hide"><Pin /></button>
            <button aria-label="Close panel"><CloseX /></button>
          </Caption>
          <Frame>
            <Pane>
              <TreeView rows={PROJECT} h={17} $classic />
              <HScroll />
            </Pane>
          </Frame>
          <Tab>Project</Tab>
        </ManagerPane>
        <ModelPane>
          <Pane>
            <TreeView rows={MODEL} h={17} />
            <HScroll />
          </Pane>
        </ModelPane>
        <ViewPane><ModelScene /></ViewPane>
      </Work>
      <Docks>
        <Dock $first>
          <SideCaption>
            <button aria-label="Close messages"><CloseX /></button>
            <button aria-label="Auto hide messages"><Pin /></button>
            <h2>Message Manager</h2>
          </SideCaption>
          <Pane><TreeView rows={MESSAGES} h={15} $classic /></Pane>
        </Dock>
        <Dock>
          <SideCaption>
            <button aria-label="Close progress"><CloseX /></button>
            <button aria-label="Auto hide progress"><Pin /></button>
            <h2>Progress</h2>
          </SideCaption>
          <Pane />
        </Dock>
      </Docks>
      <StatusBar>
        <span>Ready</span>
        <Spacer />
        <StatusCell $w={26} />
        <StatusCell $w={31}>NUM</StatusCell>
        <StatusCell $w={31} />
      </StatusBar>
      <TaskBar>
        <Tray>
          <TrayButton $w={29} aria-label="Notifications">
            <svg width="24" height="24" viewBox="0 0 24 24" aria-hidden="true"><path d="M7 2h16v13h-9l-3 4v-4H7z" fill="#fff" /><path d="M10 6h10M10 9h10" stroke="#643" strokeWidth="1.200" /><circle cx="8" cy="16" r="7.500" fill="#b01822" stroke="#d88" strokeWidth=".8" /><path d="M7 12c0 2 3 2 3 0M8 12v8" stroke="#fff" strokeWidth="1.300" fill="none" /></svg>
          </TrayButton>
          <Clock><span dir="rtl">٠٢:٤٤ م</span><span>٢٠٢١/١٠/٢٩</span></Clock>
          <TrayButton $w={32}>ENG</TrayButton>
          <TrayButton aria-label="Volume"><TI><path d="M2 9h4l5-5v16l-5-5H2zM14 9q2 3 0 6M17 6q4 6 0 12M20 4q5 8 0 16" /></TI></TrayButton>
          <TrayButton aria-label="Network"><TI><circle cx="11" cy="11" r="9.500" /><ellipse cx="11" cy="11" rx="4.500" ry="9.500" /><path d="M2 8h18M2 14h12M11 2v14" /><circle cx="18" cy="18" r="5" fill="#3c1e28" /><path d="m14.500 14.500 7 7" /></TI></TrayButton>
          <TrayButton aria-label="Battery"><TI><path d="M8 7h14v11H6v-4" /><path d="M10 10h9v5h-9z" fill="#fff" /><path d="M1 3v3M5 3v3M0 6h6v3q-3 3-6 0zM3 10v6h3" /></TI></TrayButton>
          <TrayButton $w={21} aria-label="Microphone"><TI><rect x="8" y="2" width="8" height="13" rx="3" fill="#fff" /><path d="M4 11c0 9 16 9 16 0M12 18v4M7 22h10" /></TI></TrayButton>
          <TrayButton aria-label="Recording"><TI><circle cx="12" cy="12" r="9.500" stroke="#b34a20" /><circle cx="12" cy="12" r="6.500" fill="#f0581a" stroke="none" /></TI></TrayButton>
          <TrayButton aria-label="Show hidden icons"><TI><path d="m4 16 8-8 8 8" strokeWidth="2" /></TI></TrayButton>
          <Weather>
            <svg width="20" height="20" viewBox="0 0 20 20" aria-hidden="true"><path d="M11 1c11 5 8 17-1 18-5 0-8-3-9-6 8 2 13-4 10-12z" fill="#fbc02d" /><path d="M14 4c5 6 2 12-4 13" fill="none" stroke="#ffe36e" strokeWidth="1.500" /></svg>
            <span>20°C</span>
            <bdi>سماء صافية</bdi>
          </Weather>
        </Tray>
        <Apps>
          {APPS.map(([label, st, icon]) => (
            <AppButton key={label} aria-label={label} $open={st.open} $active={st.active}>{icon}</AppButton>
          ))}
        </Apps>
      </TaskBar>
    </App>
  );
}
